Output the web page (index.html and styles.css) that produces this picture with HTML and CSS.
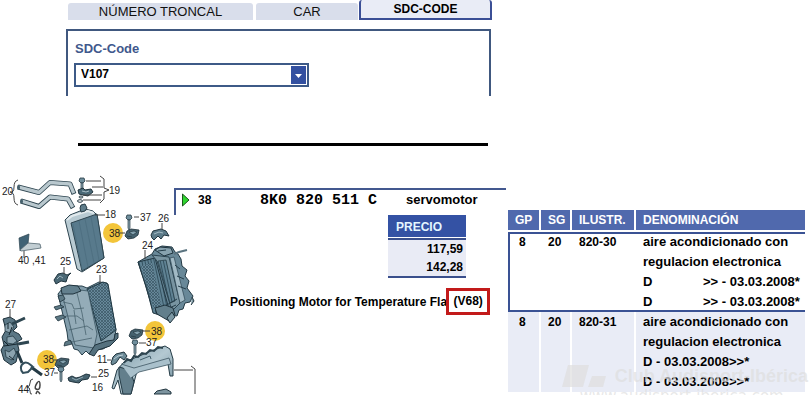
FILE: index.html
```html
<!DOCTYPE html>
<html lang="es">
<head>
<meta charset="utf-8">
<title>SDC-Code V107</title>
<link rel="stylesheet" href="styles.css">
</head>
<body>
<header class="search">
  <nav class="tabs">
    <button class="tab" type="button">NÚMERO TRONCAL</button>
    <button class="tab" type="button">CAR</button>
    <button class="tab tab-active" type="button">SDC-CODE</button>
  </nav>
  <div class="panel">
    <label class="panel-label" for="sdc">SDC-Code</label>
    <div class="picker">
      <select id="sdc" class="picker-select"><option>V107</option></select>
      <svg class="picker-arrow" viewBox="0 0 15 18" aria-hidden="true"><rect width="15" height="18" fill="#3350a0"/><path d="M4 8h7l-3.500 4z" fill="#fff"/></svg>
    </div>
  </div>
  <hr class="rule">
</header>
<main class="content">
  <div class="diagram">
    <svg class="diagram-art" viewBox="0 175 200 220" role="img" aria-label="Despiece">
      <defs>
        <pattern id="mesh" width="3" height="3" patternUnits="userSpaceOnUse"><rect width="3" height="3" fill="#67889a"/><path d="M0 0l3 3M3 0L0 3" stroke="#385462" stroke-width=".7"/></pattern>
        <pattern id="fin" width="3" height="4" patternUnits="userSpaceOnUse" patternTransform="rotate(-12)"><rect width="3" height="4" fill="#5f8293"/><path d="M.5 0v4" stroke="#345160" stroke-width="1"/></pattern>
        <linearGradient id="metal" x1="0" y1="0" x2="1" y2="1"><stop offset="0" stop-color="#7795a3"/><stop offset=".5" stop-color="#b4c9d2"/><stop offset="1" stop-color="#6d8b99"/></linearGradient>
        <g id="screw"><path d="M-3-1l1-3h4l1 3-2 2h-2z" fill="#6f8e9c" stroke="#263b45" stroke-width=".8"/><path d="M-1 1v8l1 2 1-2V1z" fill="#8ba5b0" stroke="#263b45" stroke-width=".7"/></g>
        <g id="motor"><path d="M-7 3l2-5 4-2 8 1-1 5-4 3-6 1z" fill="#46626f" stroke="#1c2f38" stroke-width=".8"/><path d="M-3-1l5-1 3 1-4 3zM-5 3l5 1" fill="#82a0ad" stroke="#1c2f38" stroke-width=".6"/></g>
      </defs>
      <g class="spots"><circle cx="113" cy="233" r="10"/><circle cx="155" cy="331" r="10"/><circle cx="47" cy="360" r="10"/></g>

      <g fill="none" stroke-linejoin="round">
        <path d="M18 187L39 192.500 50 182.500 70 184 74 194" stroke="#2d444f" stroke-width="5"/>
        <path d="M18.800 187.200L39 192.500 50 182.500 70 184 73.700 193.200" stroke="#b9c8ce" stroke-width="3.400"/>
        <path d="M21 201L39 206.500 50 197 68 199 73 208" stroke="#2d444f" stroke-width="5"/>
        <path d="M21.800 201.200L39 206.500 50 197 68 199 72.600 207.200" stroke="#b9c8ce" stroke-width="3.400"/>
      </g>
      <ellipse cx="18.500" cy="187.300" rx="1.500" ry="2.500" fill="#46616d"/>
      <ellipse cx="21.500" cy="201.300" rx="1.500" ry="2.500" fill="#46616d"/>
      <use href="#screw" x="82" y="182"/>
      <path d="M78 190l5-2 2 2 6-1 2 3-5 4-5-1-4-1z" fill="#4a6977" stroke="#1f323b"/>
      <path d="M82 191l4 1 3-1" fill="none" stroke="#a9bec7"/>
      <ellipse cx="81" cy="197" rx="2" ry="1" fill="none" stroke="#263b45"/>
      <ellipse cx="80" cy="201" rx="2.500" ry="1.300" fill="none" stroke="#263b45"/>

      <path d="M65 220l5-5 15-6 8 2 4 4 7 43-22 14-5-3z" fill="#b8cad2" stroke="#2d444f"/>
      <path d="M71 223l26-9 7 44-22 13z" fill="#587a8c" stroke="#2d444f"/>
      <path d="M73 224l9 45M79 221l9 46M85 219l9 44M91 217l8 43" stroke="#4b6c7d" stroke-width=".7"/>
      <path d="M67 220l5-4 16-5 6 2" fill="none" stroke="#e2eaed" stroke-width="2"/>
      <path d="M80 208l1-3 4-1 2 4-2 3-4 1z" fill="#5f7d8b" stroke="#263b45"/>

      <path d="M19 238l10-4-1 10-8 7z" fill="#3f6275" stroke="#2d444f" stroke-width=".7"/>
      <path d="M20 250l8-7 12 1 1 4-20 3z" fill="#c2ced3" stroke="#50656f" stroke-width=".8"/>
      <path d="M54 280l4-6 5-1 4 2 4-2-3 3-2 6-5-1-5 3z" fill="#4a6875" stroke="#20343e"/>
      <path d="M57 279l3-3 3 2" fill="none" stroke="#9db4be"/>

      <use href="#screw" x="129" y="219"/>
      <use href="#motor" x="132" y="233"/>
      <path d="M151 235l2-4 8-2 5 2 3 5-5-1-3 4-3-3-4 4-2-2z" fill="#5c7b89" stroke="#20343e"/>
      <path d="M154 234l5-2 4 1" stroke="#a6bdc7" fill="none"/>

      <path d="M138 262l14-8 3-5 7-3 10 1 3 5 3 2 3 5 1 7 5 4-2 6 4 5-2 7 6 8-3 6-5 1-2 6-4 1-2 6-7-1-4 3-13-8-8-26z" fill="#688898" stroke="#233944"/>
      <path d="M138 262l17-4 15 55-3 4-14-4-7-27z" fill="url(#fin)" stroke="#233944"/>
      <path d="M141 266l11-3 10 46-8 1-7-24z" fill="url(#mesh)"/>
      <path d="M152 255l17 2 11 46-8 8-15-50z" fill="#7894a1" stroke="#2c4552"/>
      <path d="M158 261l8-1 9 41-5 2z" fill="url(#fin)" stroke="#233944" stroke-width=".7"/>
      <path d="M170 258l4-1 11 43-5 3z" fill="#a2bac5" stroke="#2c4552" stroke-width=".7"/>
      <path d="M155 250l5-3 11 1 2 5-9 3z" fill="#87a2af" stroke="#20343e"/>
      <path d="M158 251l8-1M175 265l5 4M177 276l7 3M178 286l8 3M165 306l12-7M156 314l20-9" stroke="#253e4a" fill="none"/>
      <path d="M174 254l5-2 8-2" stroke="#5b7480" stroke-width="2" fill="none"/>
      <path d="M155 308l10-3 8 3 2 7-6 6-12-7z" fill="#627f8c" stroke="#20343e"/>
      <path d="M167 318l5-6 3 5-5 6zM192 297l2 4-3 4" fill="#7c98a4" stroke="#20343e"/>

      <path d="M58 294l4-5 8-3 12 0 5 2 12-6 8 1 9 47-2 10-4 5-7 4-8 1-6 4-3-3-4 4-4-5-4-1-3-8-3-1-1-8z" fill="#829dab" stroke="#263f4b"/>
      <path d="M87 289l16-7 5 2 8 46-15 11z" fill="url(#mesh)" stroke="#1f3843"/>
      <path d="M62 293l18-3 8 1 9 43-3 14-19-3z" fill="#94acb8" stroke="#3b5662" stroke-width=".8"/>
      <path d="M63 302l9 2 2 5 10-1M66 316l11 0 7 5M69 330l18-4 6 4M77 293l5 20 4 22M67 343l25-5M74 310l2 14" fill="none" stroke="#49636f" stroke-width=".8"/>
      <path d="M61 288l8-3 9 1 3 5-8 3-11 0z" fill="#627f8d" stroke="#20343e"/>
      <path d="M54 307l7-2 3 2-8 3zM55 317l7-2 4 2-8 4zM65 342l5-2 2 4-8 2zM58 296l5-1 2 4-5 3z" fill="#5d7985" stroke="#20343e" stroke-width=".8"/>
      <path d="M95 345l12-4 7-1 1-6 3-1v5l-8 8-12 4-4 6-5-2z" fill="#55717e" stroke="#20343e"/>

      <path d="M3 319l7-2 5 3 2 7-4 4 6 3 3 5-5 3 2 8-3 12-5 3-7-5-3-10 3-5-2-8 4-7z" fill="#5b7785" stroke="#1d303a"/>
      <path d="M5 325l5-3 4 5-4 6-5-2zM7 337l6-1 4 5-4 3-6-1zM5 350l4 2 5-4 2 5-4 7-6-3z" fill="#8ba3af" stroke="#253a44" stroke-width=".8"/>
      <path d="M8 323v6M12 327l-3 8M4 346l13-2M9 356l5 4M4 341l5 5" stroke="#17272f" fill="none"/>
      <path d="M12 324l13-6M18 344l11-2" stroke="#2e4651" stroke-width="3"/>
      <path d="M17 351l5 12M31 367l11 8" stroke="#253b46" stroke-width="3" fill="none"/>
      <path d="M23 373c-3-3-3-8 1-10s6 2 9 4l-5 5z" stroke="#344f5c" stroke-width="2" fill="none"/>

      <use href="#motor" x="136" y="333"/>
      <use href="#screw" x="135" y="344"/>
      <use href="#motor" x="62" y="362"/>
      <use href="#screw" x="61" y="371"/>
      <path d="M68 378l4-2 4 2 4-1 6-3 4 1-2 4-6 1-3 3-6-1-4-1z" fill="#46626f" stroke="#20343e"/>
      <path d="M72 378l4 2 7-3" stroke="#91aab5" fill="none"/>
      <path d="M111 363l2-6 3-3 8-2 3 4-3 4-4-3-4 6-4 2z" fill="#6d8c99" stroke="#20343e"/>
      <path d="M114 359l4-3 5-1" fill="none" stroke="#bdced6"/>

      <path d="M112 388l5-18 7-8 13-5 14-6 14-5 5 3 3 10 0 17-3 0-2-12-31 7-6 23-10 0-3-14-4 9z" fill="url(#metal)" stroke="#243b46"/>
      <path d="M119 367l11 3 4 12-3 12-8 0-4-19z" fill="#637f8c" stroke="#243b46"/>
      <path d="M121 364l13 4 35-10 2 6-32 8-8 6" fill="#a9c0cb" stroke="#3d5662" stroke-width=".8"/>
      <path d="M124 363l3-4 4 2 3-5 4 1 4-4 4 1 4-4 4 1 4-4 5 1" fill="none" stroke="#2d444f" stroke-width="2"/>
      <path d="M140 360l10-4 1 3" fill="none" stroke="#415d6a"/>
      <path d="M154 394l3-3 9-2 5 3v2z" fill="#7d949f" stroke="#20343e"/>

      <g class="leads">
        <path d="M18 180q-4 1-4 7t-4 5q4 0 4 6t4 7"/>
        <path d="M86 181h15M92 187h11M83 195h19M83 200h18M100 176l4 3v9l5 2-5 2v7l-4 4"/>
        <path d="M95 215h10M24 251v7M64 267v7M134 217h5M162 223v6M119 233h6M145 250v9M100 275v8M10 309v9M142 331h8M139 343h7M54 360h4M54 373h4M91 377h6M107 360h4M174 370h19M191 366l4 3v25M33 379q-3 0-3 4t-3 4q3 0 3 4t2 3"/>
        <path d="M37 383q3-4 3 2t-4 4q-2-1 1-6M36 394q1-5 4 0" stroke-width="1.500"/>
      </g>
      <g class="marks">
        <text x="2" y="195">20</text><text x="109" y="194">19</text><text x="105" y="218">18</text>
        <text x="18" y="264">40 ,41</text><text x="60" y="265">25</text><text x="140" y="221">37</text>
        <text x="158" y="222">26</text><text x="109" y="237">38</text><text x="142" y="249">24</text>
        <text x="96" y="273">23</text><text x="5" y="308">27</text><text x="151" y="335">38</text>
        <text x="146" y="346">37</text><text x="43" y="363">38</text><text x="44" y="376">37</text>
        <text x="97" y="363">11</text><text x="98" y="377">25</text><text x="92" y="391">16</text><text x="18" y="393">44</text>
      </g>
    </svg>
  </div>
  <section class="detail">
    <div class="part">
      <svg class="part-arrow" viewBox="0 0 8 14" aria-hidden="true"><path d="M.5 1v12L7 7z" fill="#2fd52f" stroke="#1b561b"/></svg>
      <span>38</span>
      <span class="part-code">8K0 820 511 C</span>
      <span class="part-name">servomotor</span>
    </div>
    <table class="price">
      <thead><tr><th>PRECIO</th></tr></thead>
      <tbody><tr><td>117,59</td></tr><tr><td>142,28</td></tr></tbody>
    </table>
    <p class="caption">Positioning Motor for Temperature Flap<span class="caption-code">(V68)</span></p>
  </section>
  <section class="catalog">
    <table class="list">
      <thead><tr><th>GP</th><th>SG</th><th>ILUSTR.</th><th>DENOMINACIÓN</th></tr></thead>
      <tbody>
        <tr class="selected"><td>8</td><td>20</td><td>820-30</td><td>aire acondicionado con<br>regulacion electronica<br><span class="period">D</span>&gt;&gt; - 03.03.2008*<br><span class="period">D</span>&gt;&gt; - 03.03.2008*</td></tr>
        <tr class="other"><td>8</td><td>20</td><td>820-31</td><td>aire acondicionado con<br>regulacion electronica<br>D - 03.03.2008&gt;&gt;*<br>D - 03.03.2008&gt;&gt;*</td></tr>
      </tbody>
    </table>
    <div class="watermark">
      <div class="watermark-name"><svg class="watermark-logo" viewBox="0 0 46 22" aria-hidden="true"><path d="M6 0h21l-6 22H0zM30 11h14l-3 11H26z"/></svg>Club Audisport-Ibérica</div>
      <div class="watermark-url">www.audisport-iberica.com</div>
    </div>
  </section>
</main>
</body>
</html>
```
FILE: styles.css
```css
* { box-sizing: border-box; }
body {
  margin: 0;
  background: #fff;
  color: #000;
  font: bold 12px/20px "Liberation Sans", Arial, sans-serif;
}
.search { max-width: 426px; margin-left: 66px; }
.tabs {
  display: grid;
  grid-template-columns: 187fr 102fr 133fr;
  column-gap: 1px;
  align-items: end;
  height: 20px;
  padding-left: 2px;
}
.tab {
  height: 17px;
  padding: 0;
  border: 0;
  border-radius: 3px 3px 0 0;
  background: #d9deeb;
  color: #111;
  font: 13px/17px "Liberation Sans", Arial, sans-serif;
}
.tab:first-child { margin-right: 2px; }
.tab-active {
  height: 20px;
  border: 2px solid #3b4f96;
  border-top-width: 0;
  background: #e9ecf6;
  color: #000;
  font-size: 12px;
  font-weight: bold;
}
.panel {
  margin: 9px 1px 0 0;
  padding: 8px 6px 9px;
  border: 2px solid #40587f;
  border-bottom: 0;
}
.panel-label { display: block; margin-left: 1px; color: #40588c; font-size: 13px; line-height: 20px; }
.picker { position: relative; width: 235px; margin-top: 4px; }
.picker-select {
  display: block;
  width: 100%;
  height: 24px;
  padding: 0 0 2px 5px;
  border: 2px solid #3d5a87;
  border-radius: 0;
  background: #fff;
  color: #000;
  font: bold 12px "Liberation Sans", Arial, sans-serif;
  appearance: none;
}
.picker-arrow { position: absolute; top: 3px; right: 3px; width: 15px; height: 18px; }
.rule { height: 3px; margin: 47px 4px 0 12px; border: 0; background: #000; }

.content { display: flex; align-items: flex-start; margin-top: 29px; }
.diagram { flex: none; width: 174px; }
.diagram-art { display: block; width: 200px; height: 220px; }
.spots { fill: #f3c53a; }
.leads { fill: none; stroke: #444; stroke-width: 1; }
.marks { fill: #222; font: 10px "Liberation Sans", Arial, sans-serif; }

.detail { position: relative; flex: 1; margin-top: 13px; }
.part {
  display: grid;
  grid-template-columns: 16px 62px 146px 1fr;
  align-items: center;
  height: 27px;
  padding: 0 0 6px 6px;
  border-top: 2px solid #43588f;
  border-left: 2px solid #43588f;
}
.part-arrow { width: 8px; height: 14px; }
.part-code { font: bold 15px/19px "Liberation Mono", monospace; }
.part-name { font-size: 13px; }
.price { width: 78px; margin: 0 40px 0 auto; border-spacing: 0; border-bottom: 2px solid #3a4f8c; }
.price th {
  height: 25px;
  padding: 0 0 0 8px;
  border-bottom: 2px solid #3a4f8c;
  background: #3452a4;
  box-shadow: inset 0 -1px #fff;
  color: #e4f6ff;
  font-size: 12px;
  line-height: 22px;
  text-align: left;
}
.price td { padding: 0 3px 0 0; background: #e9ebf5; line-height: 18px; text-align: right; }
.caption { display: flex; align-items: center; margin: 10px 0 0 56px; white-space: nowrap; }
.caption-code { margin-left: -8px; padding: 0 4px; border: 3px solid #c21a1a; background: #fff; line-height: 21px; }

.catalog { position: relative; flex: none; width: 303px; margin-top: 35px; padding: 0 4px 0 2px; }
.list { width: 100%; border-collapse: separate; border-spacing: 0; }
.list th, .list td { padding: 0 0 0 7px; text-align: left; vertical-align: top; }
.list th { height: 22px; border-right: 2px solid #fff; border-bottom: 2px solid #fff; background: #5069ad; color: #fff; font-size: 12px; }
.list th:nth-child(1) { width: 33px; }
.list th:nth-child(2) { width: 31px; }
.list th:nth-child(3) { width: 64px; }
.list th:last-child { border-right: 0; }
.list td { font-size: 12px; line-height: 20px; }
.list td:first-child { padding-left: 11px; }
.list td:last-child { font-size: 13px; }
.list .selected td { box-shadow: inset 0 2px #3a5294, inset 0 -2px #3a5294; }
.list .selected td:first-child { box-shadow: inset 2px 2px #3a5294, inset 0 -2px #3a5294; }
.list .other td { border-right: 2px solid #fff; background: #e9ecf6; }
.list .other td:last-child { border-right: 0; }
.period { display: inline-block; width: 60px; }

.watermark { position: absolute; right: 1px; bottom: -13px; color: rgba(222, 222, 222, .7); white-space: nowrap; }
.watermark-name { display: flex; align-items: center; gap: 7px; font-size: 18px; line-height: 22px; }
.watermark-logo { width: 46px; height: 22px; fill: currentColor; }
.watermark-url { padding-left: 18px; font: 15px/18px "DejaVu Sans", sans-serif; }
```
